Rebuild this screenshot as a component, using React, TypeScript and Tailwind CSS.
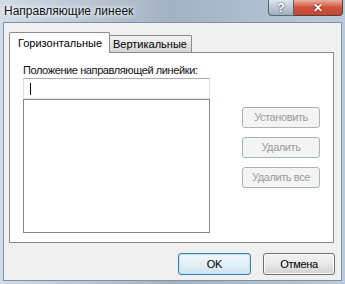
export default function App() {
  const disabledBtn =
    "w-[78px] h-[21px] rounded-[3px] border border-[#adb2b5] bg-[#f4f4f4] text-[#9a9a9a] tracking-[-0.4px] flex items-center justify-center leading-none";

  return (
    <div className="w-[345px] h-[284px] flex flex-col bg-gradient-to-r from-[#d2dce7] via-[#a3b2c2] to-[#bccbdb] font-['Liberation_Sans',sans-serif] text-[11px] text-black select-none">
      {/* title bar */}
      <div className="h-[22px] flex items-start">
        <span className="pl-[4px] pt-[3px] leading-[16px] text-[12px] text-[#111] [text-shadow:0_0_6px_#fff,0_0_4px_#fff]">
          Направляющие линеек
        </span>
        <div className="ml-auto mr-[2px] flex">
          <div className="w-[26px] h-[16px] rounded-bl-[4px] border border-t-0 border-[#56667a] bg-gradient-to-b from-[#dfe5ec] to-[#9eacbc] flex items-center justify-center text-white font-bold text-[12px] leading-none [text-shadow:0_0_2px_#223]">
            ?
          </div>
          <div className="w-[49px] h-[16px] rounded-br-[4px] border border-l-0 border-t-0 border-[#5f3a35] bg-gradient-to-b from-[#eab0a2] via-[#d0513c] to-[#c04a36] flex items-center justify-center text-white font-bold text-[12px] leading-none [text-shadow:0_0_2px_#400]">
            ✕
          </div>
        </div>
      </div>

      {/* client area */}
      <div className="mx-[3px] h-[259px] bg-[#f0f0f0] border border-[#7d91a8] flex flex-col">
        {/* tabs */}
        <div className="pl-[5px] pt-[9px] h-[29px] flex items-end">
          <div className="relative z-10 w-[101px] h-[21px] -mb-[1px] bg-white border border-b-0 border-[#898c95] rounded-t-[2px] pl-[8px] pt-[3px] leading-[14px]">
            Горизонтальные
          </div>
          <div className="w-[82px] h-[17px] bg-gradient-to-b from-[#f2f2f2] via-[#e6e6e6] to-[#d5d5d5] border border-l-0 border-b-0 border-[#898c95] rounded-tr-[2px] pl-[3px] pt-[1px] leading-[14px]">
            Вертикальные
          </div>
        </div>

        {/* tab page */}
        <div className="ml-[5px] w-[325px] h-[191px] bg-white border border-[#898c95] pl-[13px] pt-[10px]">
          <div className="leading-[14px] text-[#111] tracking-[-0.4px]">Положение направляющей линейки:</div>
          <div className="flex">
            <div className="w-[187px] mt-[1px] flex flex-col">
              <div className="h-[21px] border border-[#abadb3] border-b-[#e3e9ef] border-x-[#dbdfe6] bg-white flex items-center pl-[6px]">
                <div className="w-[1px] h-[12px] bg-black" />
              </div>
              <div className="h-[134px] border border-[#828790] bg-white" />
            </div>
            <div className="ml-[32px] pt-[30px] flex flex-col gap-[9px]">
              <div className={disabledBtn}>Установить</div>
              <div className={disabledBtn}>Удалить</div>
              <div className={disabledBtn}>Удалить все</div>
            </div>
          </div>
        </div>

        {/* dialog buttons */}
        <div className="mt-[10px] pr-[6px] flex justify-end gap-[12px] tracking-[-0.3px]">
          <div className="w-[73px] h-[22px] rounded-[3px] border border-[#3c7fb1] bg-gradient-to-b from-[#f3f9fd] via-[#e2eff7] to-[#cfe2ee] shadow-[inset_0_0_0_1px_#bfe4f9] flex items-center justify-center leading-none">
            OK
          </div>
          <div className="w-[72px] h-[22px] rounded-[3px] border border-[#707070] bg-gradient-to-b from-[#f2f2f2] via-[#e8e8e8] to-[#d2d2d2] shadow-[inset_0_0_0_1px_#fbfbfb] flex items-center justify-center leading-none">
            Отмена
          </div>
        </div>
      </div>
    </div>
  );
}
